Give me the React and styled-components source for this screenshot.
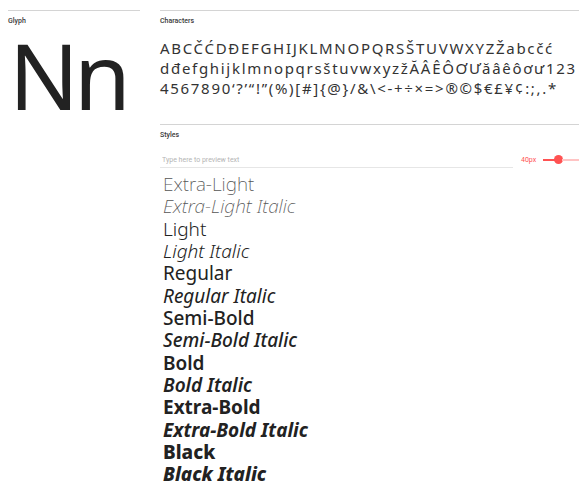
import React from "react";
import styled, { createGlobalStyle } from "styled-components";

const GlobalStyle = createGlobalStyle`
  html, body {
    margin: 0;
    padding: 0;
    background: #fff;
    overflow: hidden;
  }
  body {
    font-family: Roboto, "Liberation Sans", sans-serif;
    color: #222;
  }
`;

const styles = [
  { name: "Extra-Light", weight: 200 },
  { name: "Extra-Light Italic", weight: 200, italic: true },
  { name: "Light", weight: 300 },
  { name: "Light Italic", weight: 300, italic: true },
  { name: "Regular", weight: 400 },
  { name: "Regular Italic", weight: 400, italic: true },
  { name: "Semi-Bold", weight: 500 },
  { name: "Semi-Bold Italic", weight: 500, italic: true },
  { name: "Bold", weight: 600 },
  { name: "Bold Italic", weight: 600, italic: true },
  { name: "Extra-Bold", weight: 700 },
  { name: "Extra-Bold Italic", weight: 700, italic: true },
  { name: "Black", weight: 800 },
  { name: "Black Italic", weight: 800, italic: true },
];

const charLines = [
  "ABCČĆDĐEFGHIJKLMNOPQRSŠTUVWXYZŽabcčć",
  "dđefghijklmnopqrsštuvwxyzžĂÂÊÔƠƯăâêôơư123",
  "4567890‘?’“!”(%)[#]{@}/&\\<-+÷×=>®©$€£¥¢:;,.*",
];

function App() {
  return (
    <>
      <GlobalStyle />
      <Page>
        <Column>
          <Section>
            <Label>Glyph</Label>
            <Glyph>Nn</Glyph>
          </Section>
        </Column>
        <Column>
          <Section>
            <Label>Characters</Label>
            <Characters>
              {charLines.map((line) => (
                <CharLine key={line}>{line}</CharLine>
              ))}
            </Characters>
          </Section>
          <Section>
            <Label>Styles</Label>
            <Toolbar>
              <PreviewInput placeholder="Type here to preview text" />
              <SizeLabel>40px</SizeLabel>
              <Slider>
                <Track $filled style={{ width: "12px" }} />
                <Thumb />
                <Track />
              </Slider>
            </Toolbar>
            <StyleList>
              {styles.map((s) => (
                <StyleRow key={s.name} $weight={s.weight} $italic={s.italic}>
                  {s.name}
                </StyleRow>
              ))}
            </StyleList>
          </Section>
        </Column>
      </Page>
    </>
  );
}

const Page = styled.div`
  display: grid;
  grid-template-columns: 132px 620px;
  column-gap: 20px;
  padding: 10px 0 0 8px;
  width: 900px;
`;

const Column = styled.div`
  display: flex;
  flex-direction: column;
`;

const Section = styled.section`
  border-top: 1px solid #d4d4d4;
`;

const Label = styled.div`
  font-family: Roboto, "Liberation Sans", sans-serif;
  font-size: 7px;
  font-weight: 500;
  color: #3a3a3a;
  margin-top: 6px;
  line-height: 9px;
`;

const Glyph = styled.div`
  font-family: "Noto Sans", sans-serif;
  font-size: 92px;
  font-weight: 400;
  line-height: 92px;
  letter-spacing: -5px;
  color: #222;
  margin-top: 3px;
  padding-left: 1px;
`;

const Characters = styled.div`
  font-family: "Noto Sans", sans-serif;
  font-size: 15px;
  letter-spacing: 1.7px;
  line-height: 20px;
  color: #333;
  margin-top: 12px;
  height: 86px;
`;

const CharLine = styled.div`
  white-space: nowrap;
`;

const Toolbar = styled.div`
  display: flex;
  align-items: center;
  margin-top: 15px;
  height: 14px;
`;

const PreviewInput = styled.input`
  width: 351px;
  border: none;
  border-bottom: 1px solid #e6e6e6;
  padding: 0 0 3px 2px;
  font-family: Roboto, "Liberation Sans", sans-serif;
  font-size: 7px;
  outline: none;
  &::placeholder {
    color: #b4b4b4;
  }
`;

const SizeLabel = styled.span`
  font-family: Roboto, "Liberation Sans", sans-serif;
  font-size: 7px;
  color: #ff5252;
  margin-left: 8px;
  margin-top: -5px;
`;

const Slider = styled.div`
  display: flex;
  align-items: center;
  width: 110px;
  margin-left: 7px;
  margin-top: -5px;
`;

const Track = styled.div`
  height: 2px;
  flex: ${(p) => (p.$filled ? "none" : "1")};
  background: ${(p) => (p.$filled ? "#ff5252" : "#ffc4c4")};
`;

const Thumb = styled.div`
  width: 9px;
  height: 9px;
  border-radius: 50%;
  background: #ff5252;
  margin: 0 -1px;
`;

const StyleList = styled.div`
  margin-top: 4px;
  padding-left: 3px;
`;

const StyleRow = styled.div`
  font-family: "Noto Sans", sans-serif;
  font-size: 19px;
  line-height: 22.35px;
  font-weight: ${(p) => p.$weight};
  font-style: ${(p) => (p.$italic ? "italic" : "normal")};
  color: ${(p) => (p.$weight < 300 ? "#555" : "#222")};
`;

export default App;
